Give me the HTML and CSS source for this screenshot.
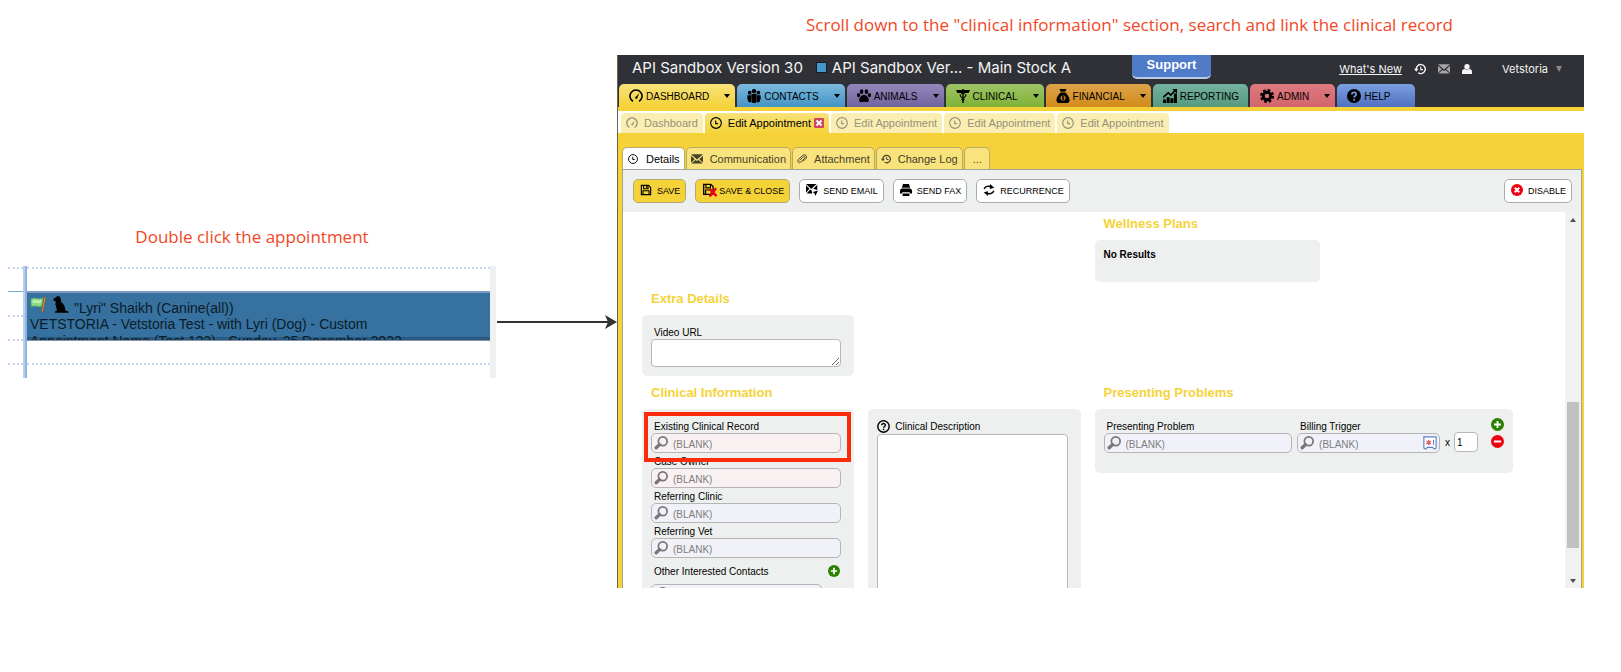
FILE: index.html
```html
<!DOCTYPE html>
<html lang="en">
<head>
    <meta charset="UTF-8">
    <meta name="viewport" content="width=device-width, initial-scale=1.0">
    <title>Link a clinical record</title>
    <link rel="stylesheet" href="styles.css">
</head>
<body>
    <!-- icon set -->
    <svg class="sprite" aria-hidden="true">
        <symbol id="gauge" viewBox="0 0 16 16"><path d="M4.500 14A6.900 6.900 0 1 1 11.500 14" fill="none" stroke="currentColor" stroke-width="1.800"/><path d="M6.500 10.200 11.700 4.800 9 11.500Z" fill="currentColor"/></symbol>
        <symbol id="clock" viewBox="0 0 16 16"><circle cx="8" cy="8" r="7.100" fill="none" stroke="currentColor" stroke-width="1.500"/><path d="M7.600 4.500V8.800H10.800" fill="none" stroke="currentColor" stroke-width="1.500"/></symbol>
        <symbol id="mail" viewBox="0 0 16 16"><path d="M0 1.500H16L8 8.500ZM0 3.500 5 8.200 0 13ZM16 3.500V13L11 8.200ZM.5 14 6 9.200 8 10.800 10 9.200 15.500 14Z" fill="currentColor"/></symbol>
        <symbol id="clip" viewBox="0 0 16 16"><path d="M4 10.500 10 4.500a1.600 1.600 0 0 1 2.400 2.300L6 13a2.800 2.800 0 0 1-4-4L9 2.300a3.600 3.600 0 0 1 5.200 5L9.500 12" fill="none" stroke="currentColor" stroke-width="1.500"/></symbol>
        <symbol id="history" viewBox="0 0 16 16"><path d="M3 8.500A6 6 0 1 1 5.500 13" fill="none" stroke="currentColor" stroke-width="1.900"/><path d="M0 7.500H6L3 11.500Z" fill="currentColor"/><path d="M9 5V8.800H12" fill="none" stroke="currentColor" stroke-width="1.500"/></symbol>
        <symbol id="people" viewBox="0 0 16 16"><g fill="currentColor"><circle cx="8" cy="2.600" r="2.600"/><circle cx="3" cy="4.200" r="2.100"/><circle cx="13" cy="4.200" r="2.100"/><path d="M5 5.600H11V10.500L10 16H6L5 10.500ZM.5 7H4.600V10.800L5.400 15H2L.3 11ZM15.500 7H11.400V10.800L10.600 15H14L15.700 11Z"/></g></symbol>
        <symbol id="paw" viewBox="0 0 16 16"><g fill="currentColor"><ellipse cx="1.800" cy="7" rx="1.800" ry="2.300"/><ellipse cx="5.300" cy="3" rx="2" ry="2.700"/><ellipse cx="10.700" cy="3" rx="2" ry="2.700"/><ellipse cx="14.200" cy="7" rx="1.800" ry="2.300"/><path d="M8 6.500C10.500 6.500 14 10.500 13.500 13.300 13 15.800 9.500 14.500 8 14.500S3 15.800 2.500 13.300C2 10.500 5.500 6.500 8 6.500Z"/></g></symbol>
        <symbol id="medic" viewBox="0 0 16 16"><g fill="currentColor"><path d="M0 1H6.500L8 3 9.500 1H16L14.500 4.500H10.500L9 6H7L5.500 4.500H1.500Z"/><circle cx="8" cy="1.800" r="1.600"/><path d="M7.200 3H8.800V16H7.200Z"/></g><path d="M5 6C4 8.500 6 9.500 8 10.500M11 6C12 8.500 10 9.500 8 10.500M6.300 11.500 8 13.500 9.700 11.500" fill="none" stroke="currentColor" stroke-width="1.300"/></symbol>
        <symbol id="money" viewBox="0 0 16 16"><path d="M4 0H12L10.500 3.200H5.500ZM5.300 4H10.700C13.500 6.500 15.500 10 15.500 12.500 15.500 15 14 16 12 16H4C2 16 .5 15 .5 12.500.5 10 2.500 6.500 5.300 4Z" fill="currentColor"/><circle cx="8" cy="10.300" r="2.900" fill="#d4901f"/><path d="M9.400 8.800H7.200V10.300H9V11.900H6.600M8 7.800V12.900" fill="none" stroke="#000" stroke-width=".9"/></symbol>
        <symbol id="chart" viewBox="0 0 16 16"><path d="M0 12H3.500V16H0ZM4.200 9.500H7.700V16H4.200ZM8.400 10.500H11.900V16H8.400ZM12.500 5H16V16H12.500Z" fill="currentColor"/><path d="M0 9.500 6 4.500 9 7 13.500 2" fill="none" stroke="currentColor" stroke-width="2"/><path d="M10.500 0H16V5.500Z" fill="currentColor"/></symbol>
        <symbol id="gear" viewBox="0 0 16 16"><circle cx="8" cy="8" r="4.300" fill="none" stroke="currentColor" stroke-width="3.400"/><circle cx="8" cy="8" r="6.600" fill="none" stroke="currentColor" stroke-width="2.800" stroke-dasharray="2.900 2.280"/></symbol>
        <symbol id="help" viewBox="0 0 16 16"><circle cx="8" cy="8" r="8" fill="#000"/><path d="M5.500 6.300C5.500 2.800 10.700 3 10.500 6.200 10.400 8 8.200 7.900 8.100 9.900" fill="none" stroke="#7796d8" stroke-width="2"/><circle cx="8.100" cy="12.300" r="1.200" fill="#7796d8"/></symbol>
        <symbol id="help-line" viewBox="0 0 16 16"><circle cx="8" cy="8" r="7" fill="none" stroke="#000" stroke-width="1.800"/><path d="M5.700 6.500C5.700 3.500 10.400 3.700 10.300 6.400 10.200 8 8.200 7.900 8.100 9.500" fill="none" stroke="#000" stroke-width="1.700"/><circle cx="8.100" cy="11.600" r="1" fill="#000"/></symbol>
        <symbol id="disk" viewBox="0 0 16 16"><path d="M1.800 1.800H11.500L14.200 4.500V14.200H1.800Z" fill="none" stroke="currentColor" stroke-width="1.500"/><path d="M4.800 2V6.200H10.800V2M4 14V9H12V14" fill="none" stroke="currentColor" stroke-width="1.400"/><path d="M8.300 2.500H9.800V5.500H8.300Z" fill="currentColor"/></symbol>
        <symbol id="disk-close" viewBox="0 0 18 16"><path d="M1.800 1.500H10L12.500 4V13H1.800Z" fill="none" stroke="currentColor" stroke-width="1.500"/><path d="M4.300 2V5.500H9.500V2M4 13V8H10.500V13" fill="none" stroke="currentColor" stroke-width="1.300"/><path d="M8.500 6.500 16.500 15M16 6 8.500 15.500" stroke="#f00012" stroke-width="2.700"/></symbol>
        <symbol id="send" viewBox="0 0 16 16"><path d="M0 0H14L7 6.500ZM0 1.800 4.500 6.200 0 11.500ZM15 1V8L9.800 6.200ZM1 12.500 5.500 7.300 7.500 8.500 8.500 12.500Z" fill="currentColor"/><path d="M9 10.500 16 8.500 12.500 16 11.500 12.500Z" fill="currentColor"/></symbol>
        <symbol id="fax" viewBox="0 0 16 16"><path d="M4 0H12L13.500 5H2.500ZM2 6H14L16 8V12.500H13V11H3V12.500H0V8ZM3.500 12.500H12.500V16H3.500Z" fill="currentColor"/></symbol>
        <symbol id="recur" viewBox="0 0 16 16"><path d="M1.500 6.500C3 3 7.500 2 11.500 4M14.500 9C13 13 8.500 14 4.500 12" fill="none" stroke="currentColor" stroke-width="2"/><path d="M9.500 0 15 5 9 6.500ZM6.500 9.500 1 11 6.500 16Z" fill="currentColor"/></symbol>
        <symbol id="search" viewBox="0 0 16 16"><circle cx="10" cy="6" r="5" fill="none" stroke="#777" stroke-width="2"/><path d="M6.300 9.800 2.500 13.500" stroke="#777" stroke-width="3.800" stroke-linecap="round"/></symbol>
        <symbol id="add" viewBox="0 0 16 16"><circle cx="8" cy="8" r="8" fill="#2b8000"/><path d="M8 3.800V12.200M3.800 8H12.200" stroke="#fff" stroke-width="2.300"/></symbol>
        <symbol id="remove" viewBox="0 0 16 16"><circle cx="8" cy="8" r="8" fill="#ee0010"/><path d="M3.500 8H12.500" stroke="#fff" stroke-width="2.500"/></symbol>
        <symbol id="disable" viewBox="0 0 16 16"><circle cx="8" cy="8" r="8" fill="#ee0010"/><path d="M5 5 11 11M11 5 5 11" stroke="#fff" stroke-width="2.500"/></symbol>
        <symbol id="close" viewBox="0 0 16 16"><rect width="16" height="16" rx="2" fill="#cf4466"/><path d="M4 4 12 12M12 4 4 12" stroke="#fff" stroke-width="3"/></symbol>
        <symbol id="user" viewBox="0 0 16 16"><circle cx="8" cy="4.300" r="4.300" fill="currentColor"/><path d="M0 16V12C0 9.500 2 8 4.500 8Q8 10.500 11.500 8C14 8 16 9.500 16 12V16Z" fill="currentColor"/></symbol>
        <symbol id="trigger" viewBox="0 0 16 16"><path d="M1 1H15V14L13 15 11 13H5L3 15 1 14Z" fill="#fff" stroke="#5b82c8" stroke-width="1.300"/><path d="M6.500 4.500V10.500M3.800 6 9.200 9M9.200 6 3.800 9" stroke="#e0505c" stroke-width="1.400"/><path d="M12 4.500V10" stroke="#5b82c8" stroke-width="1.300"/></symbol>
        <symbol id="flag" viewBox="0 0 18 18"><path d="M1 3.500C5 .5 8 4.500 14 2L12.500 10.500C8 12.500 5.500 9 1.500 11.500Z" fill="#8edb86" stroke="#5fae62" stroke-width=".8"/><path d="M3 5C6 3.500 8 6 12 4.500L11.500 7C8 8 6 6 3 7.500Z" fill="#c5f3bd"/><path d="M16 1 12.800 17" stroke="#8a5a24" stroke-width="2.400"/><path d="M16 1.500 12.900 16.500" stroke="#d99b4c" stroke-width="1"/></symbol>
        <symbol id="dog" viewBox="0 0 18 18"><path d="M1.500 3 4 1.500 5.500 0 8 .5 9.500 3.500 9.500 6C12 8 14 11 14.300 15.500L17.500 16.500V17.800H3V16.500L5.300 15.500 4.500 12 3.500 9 4 5.500 1.800 5Z" fill="#000"/></symbol>
    </svg>

    <main class="guide">
        <section class="step step-left">
            <h2 class="caption">Double click the appointment</h2>
            <div class="schedule">
                <div class="times">
                    <div class="slot"></div>
                    <div class="slot hour"></div>
                    <div class="slot"></div>
                    <div class="slot"></div>
                    <div class="slot"></div>
                </div>
                <div class="day">
                    <div class="slot"></div>
                    <div class="slot"></div>
                    <div class="slot"></div>
                    <div class="slot"></div>
                    <div class="slot"></div>
                    <div class="appointment">
                        <div class="pet"><svg class="i17"><use href="#flag"/></svg><svg class="i17"><use href="#dog"/></svg><span>"Lyri" Shaikh (Canine(all))</span></div>
                        <div>VETSTORIA - Vetstoria Test - with Lyri (Dog) - Custom</div>
                        <div>Appointment Name (Test 123) - Sunday, 25 December 2022</div>
                    </div>
                </div>
                <div class="gutter"></div>
            </div>
        </section>

        <div class="arrow" aria-hidden="true">
            <span class="shaft"></span>
            <svg class="head" viewBox="0 0 12 14"><path d="M0 0 12 7 0 14 3 7Z" fill="#333"/></svg>
        </div>

        <section class="step">
            <h2 class="caption caption-right">Scroll down to the "clinical information" section, search and link the clinical record</h2>

            <div class="app">
                <header class="topbar">
                    <div class="titles">
                        <span>API Sandbox Version 30</span>
                        <i class="square"></i>
                        <span>API Sandbox Ver... - Main Stock A</span>
                    </div>
                    <button class="support">Support</button>
                    <div class="account">
                        <a href="#" class="whats-new">What's New</a>
                        <svg class="i12"><use href="#history"/></svg>
                        <svg class="i12 muted"><use href="#mail"/></svg>
                        <svg class="i10"><use href="#user"/></svg>
                        <span class="user">Vetstoria <i class="caret small"></i></span>
                    </div>
                </header>

                <nav class="modules">
                    <a href="#" class="module yellow"><svg class="i14"><use href="#gauge"/></svg>DASHBOARD<i class="caret"></i></a>
                    <a href="#" class="module blue"><svg class="i14"><use href="#people"/></svg>CONTACTS<i class="caret"></i></a>
                    <a href="#" class="module purple"><svg class="i14"><use href="#paw"/></svg>ANIMALS<i class="caret"></i></a>
                    <a href="#" class="module green"><svg class="i14"><use href="#medic"/></svg>CLINICAL<i class="caret"></i></a>
                    <a href="#" class="module orange"><svg class="i14"><use href="#money"/></svg>FINANCIAL<i class="caret"></i></a>
                    <a href="#" class="module teal"><svg class="i14"><use href="#chart"/></svg>REPORTING</a>
                    <a href="#" class="module red"><svg class="i14"><use href="#gear"/></svg>ADMIN<i class="caret"></i></a>
                    <a href="#" class="module royal"><svg class="i14"><use href="#help"/></svg>HELP</a>
                </nav>

                <nav class="pages">
                    <a href="#" class="page"><svg class="i12"><use href="#gauge"/></svg>Dashboard</a>
                    <a href="#" class="page active"><svg class="i12"><use href="#clock"/></svg>Edit Appointment<svg class="i10 close"><use href="#close"/></svg></a>
                    <a href="#" class="page"><svg class="i12"><use href="#clock"/></svg>Edit Appointment</a>
                    <a href="#" class="page"><svg class="i12"><use href="#clock"/></svg>Edit Appointment</a>
                    <a href="#" class="page"><svg class="i12"><use href="#clock"/></svg>Edit Appointment</a>
                </nav>

                <div class="frame">
                    <nav class="tabs">
                        <a href="#" class="tab active"><svg class="i10"><use href="#clock"/></svg>Details</a>
                        <a href="#" class="tab"><svg class="i12"><use href="#mail"/></svg>Communication</a>
                        <a href="#" class="tab"><svg class="i10"><use href="#clip"/></svg>Attachment</a>
                        <a href="#" class="tab"><svg class="i10"><use href="#history"/></svg>Change Log</a>
                        <a href="#" class="tab more">...</a>
                    </nav>

                    <div class="sheet">
                        <div class="toolbar">
                            <button class="btn primary"><svg class="i12"><use href="#disk"/></svg>SAVE</button>
                            <button class="btn primary"><svg class="i16"><use href="#disk-close"/></svg>SAVE &amp; CLOSE</button>
                            <button class="btn"><svg class="i12"><use href="#send"/></svg>SEND EMAIL</button>
                            <button class="btn"><svg class="i12"><use href="#fax"/></svg>SEND FAX</button>
                            <button class="btn"><svg class="i12"><use href="#recur"/></svg>RECURRENCE</button>
                            <button class="btn last"><svg class="i12"><use href="#disable"/></svg>DISABLE</button>
                        </div>

                        <div class="scroller">
                            <form class="details">
                                <section class="wellness">
                                    <h3>Wellness Plans</h3>
                                    <div class="panel empty">No Results</div>
                                </section>

                                <section class="extra">
                                    <h3>Extra Details</h3>
                                    <div class="panel">
                                        <div class="field">
                                            <label for="video">Video URL</label>
                                            <textarea id="video" class="video"></textarea>
                                        </div>
                                    </div>
                                </section>

                                <section class="clinical">
                                    <h3>Clinical Information</h3>
                                    <div class="panel">
                                        <div class="field highlight">
                                            <label for="record">Existing Clinical Record</label>
                                            <div class="lookup required"><svg class="i14"><use href="#search"/></svg><input id="record" type="text" value="(BLANK)"></div>
                                        </div>
                                        <div class="field">
                                            <label for="owner">Case Owner</label>
                                            <div class="lookup required"><svg class="i14"><use href="#search"/></svg><input id="owner" type="text" value="(BLANK)"></div>
                                        </div>
                                        <div class="field">
                                            <label for="clinic">Referring Clinic</label>
                                            <div class="lookup"><svg class="i14"><use href="#search"/></svg><input id="clinic" type="text" value="(BLANK)"></div>
                                        </div>
                                        <div class="field">
                                            <label for="vet">Referring Vet</label>
                                            <div class="lookup"><svg class="i14"><use href="#search"/></svg><input id="vet" type="text" value="(BLANK)"></div>
                                        </div>
                                        <div class="others">
                                            <label for="contact">Other Interested Contacts</label>
                                            <button type="button" class="icon-btn" aria-label="Add contact"><svg class="i12"><use href="#add"/></svg></button>
                                        </div>
                                        <div class="contact-row">
                                            <div class="lookup"><svg class="i14"><use href="#search"/></svg><input id="contact" type="text"></div>
                                            <button type="button" class="icon-btn" aria-label="Remove contact"><svg class="i12"><use href="#remove"/></svg></button>
                                        </div>
                                    </div>
                                </section>

                                <section class="description">
                                    <div class="panel">
                                        <label for="description"><svg class="i13"><use href="#help-line"/></svg>Clinical Description</label>
                                        <textarea id="description" class="notes"></textarea>
                                    </div>
                                </section>

                                <section class="problems">
                                    <h3>Presenting Problems</h3>
                                    <div class="panel problem">
                                        <div class="field">
                                            <label for="problem">Presenting Problem</label>
                                            <div class="lookup"><svg class="i14"><use href="#search"/></svg><input id="problem" type="text" value="(BLANK)"></div>
                                        </div>
                                        <div class="field trigger">
                                            <label for="billing">Billing Trigger</label>
                                            <div class="lookup"><svg class="i14"><use href="#search"/></svg><input id="billing" type="text" value="(BLANK)"><svg class="i14"><use href="#trigger"/></svg></div>
                                        </div>
                                        <label class="times-qty">x <input class="qty" type="text" value="1"></label>
                                        <div class="row-buttons">
                                            <button type="button" class="icon-btn" aria-label="Add problem"><svg class="i13"><use href="#add"/></svg></button>
                                            <button type="button" class="icon-btn" aria-label="Remove problem"><svg class="i13"><use href="#remove"/></svg></button>
                                        </div>
                                    </div>
                                </section>
                            </form>
                            <div class="scrollbar" aria-hidden="true">
                                <i class="caret up"></i>
                                <div class="track"><div class="thumb"></div></div>
                                <i class="caret"></i>
                            </div>
                        </div>
                    </div>
                </div>
            </div>
        </section>
    </main>
</body>
</html>
```

FILE: styles.css
```css
* {
    box-sizing: border-box;
}

body {
    margin: 0;
    background: #fff;
    color: #000;
    font-family: "Liberation Sans", Arial, sans-serif;
    font-size: 10px;
}

a {
    color: inherit;
    text-decoration: none;
}

svg {
    flex: none;
    display: block;
}

input, textarea, button {
    font: inherit;
    color: inherit;
}

.sprite {
    display: none;
}

.i10 { width: 10px; height: 10px; }
.i12 { width: 12px; height: 12px; }
.i13 { width: 13px; height: 13px; }
.i14 { width: 14px; height: 14px; }
.i16 { width: 16px; height: 14px; }
.i17 { width: 17px; height: 17px; }

.guide {
    display: grid;
    grid-template-columns: 488fr 121px 967fr;
    padding: 0 37px 0 8px;
}

.step {
    min-width: 0;
}

.step-left {
    padding-top: 212px;
}

.caption {
    margin: 0;
    padding-top: 12px;
    height: 54px;
    font: 17px/26px "Open Sans", "Noto Sans", sans-serif;
    color: #f24726;
    text-align: center;
}

.caption-right {
    height: 55px;
    padding-left: 58px;
}

/* calendar */
.schedule {
    display: flex;
    height: 112px;
    overflow: hidden;
}

.times {
    width: 17px;
    padding-top: 1px;
    border-right: 2px solid #b9cfec;
}

.day {
    flex: 1;
    position: relative;
    padding-top: 1px;
    border-left: 2px solid #8fb2e0;
}

.slot {
    height: 24px;
    border-top: 2px dotted #c6d6ee;
}

.slot.hour {
    border-top: 1px solid #7ba5d8;
}

.gutter {
    width: 6px;
    background: #f0f0f0;
}

.appointment {
    position: absolute;
    inset: 25px 0 auto 0;
    height: 50px;
    padding: 3px;
    overflow: hidden;
    background: linear-gradient(#36719f 44px, #285a82 44px);
    border-top: 2px solid #7b9cc6;
    border-bottom: 1px solid #8794a5;
    font-size: 14px;
    line-height: 17px;
    color: #0b1c29;
    white-space: nowrap;
}

.pet {
    display: flex;
    gap: 5px;
    height: 20px;
}

.pet span {
    padding-top: 4px;
}

.arrow {
    display: flex;
    align-items: center;
    height: 14px;
    margin: 315px 0 0 1px;
}

.shaft {
    flex: 1;
    height: 2px;
    margin-right: -3px;
    background: #333;
}

.head {
    width: 12px;
    height: 14px;
}

/* application window */
.app {
    border-left: 1px solid #6b6150;
    background: #f5d338;
}

.topbar {
    display: flex;
    height: 29px;
    padding: 0 22px 0 14px;
    background: #303136;
    color: #f4f4f4;
    font-family: Inter, sans-serif;
}

.titles {
    display: flex;
    align-items: center;
    width: 500px;
    height: 24px;
    font-size: 15px;
    white-space: nowrap;
}

.square {
    width: 11px;
    height: 11px;
    margin: 0 5px 0 13px;
    background: #4596ca;
    border: 1px solid #1b1c20;
}

.support {
    width: 79px;
    height: 24px;
    padding: 0 0 4px;
    background: #4f7bc8;
    border: 0;
    border-bottom: 2px solid #b9cbe9;
    border-radius: 0 0 5px 5px;
    color: #fff;
    font: bold 13px "Liberation Sans", Arial, sans-serif;
}

.account {
    display: flex;
    align-items: center;
    gap: 12px;
    height: 28px;
    margin-left: auto;
    font-size: 11px;
}

.whats-new {
    text-decoration: underline;
}

.muted {
    color: #a5a5a8;
}

.user {
    display: flex;
    align-items: center;
    gap: 8px;
    margin-left: 18px;
}

.caret {
    border: 3px solid transparent;
    border-top: 4px solid #000;
    border-bottom: 0;
}

.caret.small {
    border-top: 6px solid #8b8b8e;
}

.modules {
    display: flex;
    gap: 2px;
    height: 27px;
    padding-left: 1px;
    background: #303136;
    border-bottom: 4px solid #f5d338;
}

.module {
    display: flex;
    align-items: center;
    gap: 3px;
    padding: 2px 10px 0;
    border-radius: 5px 5px 0 0;
}

.module .caret {
    margin: 0 -5px 2px 12px;
}

.module svg {
    margin-bottom: 2px;
}

.yellow { background: linear-gradient(#f8e27b, #f5d338); }
.blue { background: linear-gradient(#7cbadd, #4494c6); }
.purple { background: linear-gradient(#9488ba, #6f639d); }
.green { background: linear-gradient(#9fc468, #7fb237); }
.orange { background: linear-gradient(#dda24a, #d28c1a); }
.teal { background: linear-gradient(#74b3a0, #57997f); padding-right: 9px; }
.red { background: linear-gradient(#dc7a80, #d3656c); }
.royal { background: linear-gradient(#7ba0e0, #4f70c0); padding-right: 25px; }

.pages {
    display: flex;
    gap: 2px;
    padding: 2px 0 0 3px;
    height: 22px;
    background: #fff;
    font-size: 11px;
}

.page {
    display: flex;
    align-items: center;
    gap: 6px;
    padding: 0 5px;
    background: #faeeb2;
    border-radius: 4px 4px 0 0;
    color: #96917c;
}

.page.active {
    background: linear-gradient(#f8e27b, #f5d338);
    color: #000;
}

.close {
    margin-left: -3px;
}

.frame {
    padding: 14px 2px 0 4px;
}

.tabs {
    display: flex;
    gap: 1px;
    height: 22px;
    font-size: 11px;
}

.tab {
    display: flex;
    align-items: center;
    gap: 7px;
    padding: 0 4px;
    background: #f9e37c;
    border: 1px solid #b9a968;
    border-bottom: 0;
    border-radius: 5px 5px 0 0;
    color: #45412c;
}

.tab.active {
    background: #fff;
    color: #000;
    gap: 8px;
    padding-left: 5px;
}

.tab.more {
    padding: 0 7px 0 8px;
}

.sheet {
    background: #fff;
    border: 1px solid #a3a498;
    border-width: 1px 1px 0;
}

.toolbar {
    display: flex;
    gap: 9px;
    padding: 9px 9px 9px 10px;
    background: #eef0ef;
}

.btn {
    display: flex;
    align-items: center;
    gap: 5px;
    height: 24px;
    padding: 0 5px 0 6px;
    background: #fff;
    border: 1px solid #aaa;
    border-radius: 5px;
    font-size: 9px;
    color: #000;
}

.btn svg {
    margin-bottom: 3px;
}

.btn.primary {
    background: #f5d338;
    border-color: #b3a878;
}

.btn .i16 {
    margin-right: -4px;
}

.btn.last {
    margin-left: auto;
}

.scroller {
    display: flex;
    height: 376px;
    overflow: hidden;
}

.details {
    flex: 1;
    display: grid;
    grid-template-columns: 212fr 212fr 418fr;
    grid-template-rows: 71px 98px auto;
    column-gap: 14px;
    padding: 5px 52px 0 19px;
}

h3 {
    margin: 0 0 9px 9px;
    font-size: 13px;
    line-height: 14px;
    color: #f5d338;
}

.wellness { grid-column: 3; grid-row: 1; }
.extra { grid-column: 1; grid-row: 2; padding-top: 4px; }
.clinical { grid-column: 1; grid-row: 3; }
.description { grid-column: 2; grid-row: 3; padding-top: 23px; }
.problems { grid-column: 3; grid-row: 3; }

.panel {
    padding: 9px 13px 9px 9px;
    background: #eef0ef;
    border-radius: 5px;
}

.panel.empty {
    width: 54%;
    height: 42px;
    font-weight: bold;
}

.field {
    min-width: 0;
}

.field label {
    display: block;
    height: 15px;
    padding-left: 3px;
    line-height: 17px;
}

.lookup {
    display: flex;
    align-items: center;
    height: 20px;
    padding: 0 2px;
    background: #f1f2f9;
    border: 1px solid #b5b5b8;
    border-radius: 5px;
}

.lookup.required {
    background: #f9f1f1;
}

.lookup input {
    flex: 1;
    min-width: 0;
    padding: 2px 0 0 5px;
    background: none;
    border: 0;
    outline: 0;
    color: #7d7d7d;
}

textarea {
    display: block;
    width: 100%;
    padding: 2px;
    background: #fff;
    border: 1px solid #b5b8b8;
    border-radius: 4px;
}

.video {
    height: 28px;
}

.notes {
    height: 220px;
}

.clinical .panel {
    height: 240px;
}

.highlight {
    position: relative;
}

.highlight::after {
    content: "";
    position: absolute;
    inset: -6px -10px -9px -7px;
    border: 4px solid #f92c0b;
}

.others {
    display: flex;
    align-items: center;
    justify-content: space-between;
    height: 26px;
    padding: 0 1px 0 3px;
}

.contact-row {
    display: flex;
    align-items: center;
    justify-content: space-between;
    padding-right: 1px;
}

.contact-row .lookup {
    width: 171px;
}

.icon-btn {
    padding: 0;
    background: none;
    border: 0;
}

.description label {
    display: flex;
    align-items: center;
    gap: 5px;
    height: 16px;
}

.problem {
    display: flex;
    align-items: flex-start;
    gap: 5px;
    height: 64px;
    padding-right: 9px;
}

.problem .field {
    flex: 190;
}

.problem .trigger {
    flex: 144;
}

.times-qty {
    display: flex;
    align-items: center;
    gap: 4px;
    padding-top: 14px;
    margin-right: 8px;
}

.qty {
    width: 24px;
    height: 20px;
    padding: 0 2px;
    background: #fff;
    border: 1px solid #b5b8b8;
    border-radius: 4px;
}

.row-buttons {
    display: grid;
    gap: 4px;
}

.scrollbar {
    display: flex;
    flex-direction: column;
    align-items: center;
    width: 16px;
    padding: 6px 0 5px;
    background: #f1f1f1;
}

.scrollbar .caret {
    border-top-color: #505050;
}

.scrollbar .up {
    border-top: 0;
    border-bottom: 4px solid #505050;
}

.track {
    flex: 1;
    width: 12px;
    padding-top: 180px;
}

.thumb {
    height: 146px;
    background: #c1c1c1;
}
```
